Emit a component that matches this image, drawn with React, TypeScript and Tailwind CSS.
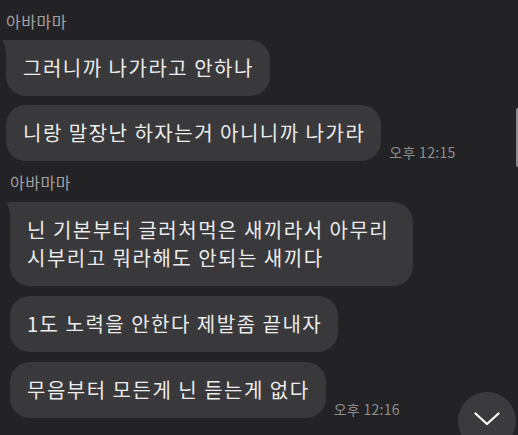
import React from "react";

const font = { fontFamily: '"Noto Sans CJK KR", "Noto Sans", sans-serif' };

function Tail() {
  return (
    <svg
      className="absolute left-[-4px] top-0"
      width="14"
      height="14"
      viewBox="0 0 14 14"
    >
      <path d="M0 0.5 Q2 0 6 0 L14 0 L14 14 L4 14 Q4 6 0 0.5 Z" fill="#39393b" />
    </svg>
  );
}

function Bubble({
  text,
  first,
  time,
  wide,
}: {
  text: string;
  first?: boolean;
  time?: string;
  wide?: boolean;
}) {
  return (
    <div className="flex items-end gap-[8px]">
      <div
        className={
          "relative bg-[#39393b] text-[#ececec] text-[20px] leading-[28px] tracking-[1.5px] pl-[17px] pr-[16px] py-[14px] rounded-[20px] whitespace-pre-line " +
          (first ? "rounded-tl-[4px] " : "") +
          (wide ? "w-[403px]" : "")
        }
      >
        {first && <Tail />}
        <span className="relative">{text}</span>
      </div>
      {time && (
        <span className="text-[14px] leading-[16px] tracking-[0.3px] text-[#8e8e90] pb-[1px] whitespace-nowrap">
          {time}
        </span>
      )}
    </div>
  );
}

export default function App() {
  return (
    <div
      className="relative w-[518px] h-[435px] overflow-hidden bg-[#232325]"
      style={font}
    >
      <div className="flex flex-col pt-[11px]">
        {/* first group */}
        <div className="flex flex-col pl-[6px]">
          <div className="text-[16px] leading-[20px] tracking-[0.5px] text-[#a2a2a4] mb-[9px]">아바마마</div>
          <div className="flex flex-col gap-[9px]">
            <Bubble text="그러니까 나가라고 안하나" first />
            <Bubble text="니랑 말장난 하자는거 아니니까 나가라" time="오후 12:15" />
          </div>
        </div>

        {/* second group */}
        <div className="flex flex-col pl-[10px] mt-[11px]">
          <div className="text-[16px] leading-[20px] tracking-[0.5px] text-[#a2a2a4] mb-[10px]">아바마마</div>
          <div className="flex flex-col gap-[10px]">
            <Bubble
              text={"닌 기본부터 글러처먹은 새끼라서 아무리\n시부리고 뭐라해도 안되는 새끼다"}
              first
              wide
            />
            <Bubble text="1도 노력을 안한다 제발좀 끝내자" />
            <Bubble text="무음부터 모든게 닌 듣는게 없다" time="오후 12:16" />
          </div>
        </div>
      </div>

      {/* scroll indicator */}
      <div className="absolute right-0 top-[108px] w-[2px] h-[59px] bg-[#8a8a8c] rounded-l" />

      {/* scroll to bottom */}
      <button className="absolute left-[458px] top-[392px] w-[58px] h-[58px] rounded-full bg-[#3b3b3d] flex items-start justify-center pt-[20px]">
        <svg width="26" height="14" viewBox="0 0 26 14" fill="none">
          <path d="M1.5 1.5 L13 12 L24.5 1.5" stroke="#ffffff" strokeWidth="2.2" strokeLinecap="round" strokeLinejoin="round" />
        </svg>
      </button>
    </div>
  );
}
